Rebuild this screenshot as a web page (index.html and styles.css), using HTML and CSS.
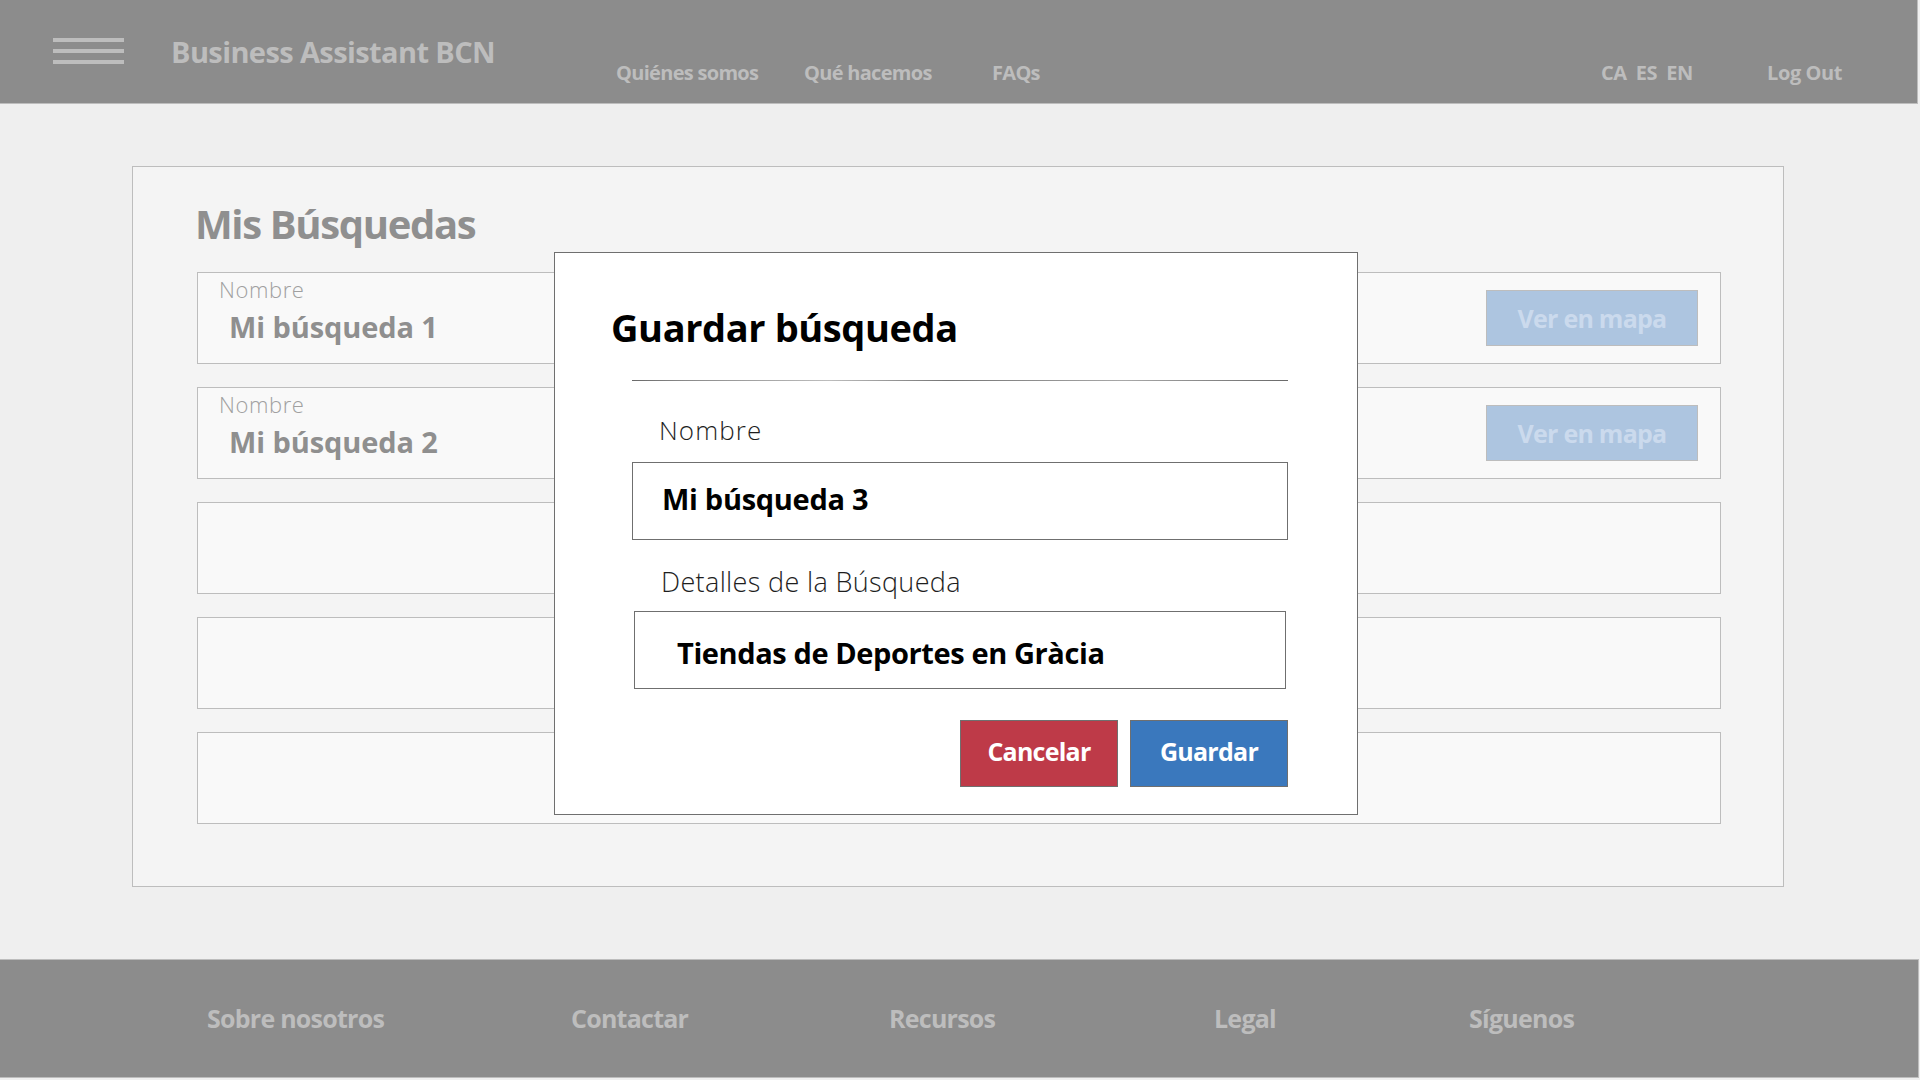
FILE: index.html
```html
<!DOCTYPE html>
<html lang="es">
<head>
<meta charset="utf-8">
<title>Business Assistant BCN - Mis Búsquedas</title>
<link rel="stylesheet" href="styles.css">
</head>
<body>
<div class="page">
  <header class="topbar">
    <div class="burger"><span></span><span></span><span></span></div>
    <div class="brand">Business Assistant BCN</div>
    <nav class="mainnav">
      <a class="navlink">Quiénes somos</a>
      <a class="navlink">Qué hacemos</a>
      <a class="navlink">FAQs</a>
    </nav>
    <div class="langs"><a>CA</a><a>ES</a><a>EN</a></div>
    <a class="logout">Log Out</a>
  </header>

  <main class="main">
    <section class="panel">
      <h1 class="panel-title">Mis Búsquedas</h1>
      <div class="rows">
        <div class="row">
          <div class="row-info">
            <div class="row-label">Nombre</div>
            <div class="row-value">Mi búsqueda 1</div>
          </div>
          <button class="map-btn">Ver en mapa</button>
        </div>
        <div class="row">
          <div class="row-info">
            <div class="row-label">Nombre</div>
            <div class="row-value">Mi búsqueda 2</div>
          </div>
          <button class="map-btn">Ver en mapa</button>
        </div>
        <div class="row"></div>
        <div class="row"></div>
        <div class="row"></div>
      </div>
    </section>
  </main>

  <footer class="footer">
    <a>Sobre nosotros</a>
    <a>Contactar</a>
    <a>Recursos</a>
    <a>Legal</a>
    <a>Síguenos</a>
  </footer>

  <div class="modal">
    <h2 class="modal-title">Guardar búsqueda</h2>
    <div class="modal-body">
      <div class="separator"></div>
      <div class="field-label">Nombre</div>
      <div class="field field-name"><span>Mi búsqueda 3</span></div>
      <div class="field-label field-label-details">Detalles de la Búsqueda</div>
      <div class="field field-details"><span>Tiendas de Deportes en Gràcia</span></div>
      <div class="actions">
        <button class="btn btn-cancel">Cancelar</button>
        <button class="btn btn-save">Guardar</button>
      </div>
    </div>
  </div>
</div>
</body>
</html>
```
FILE: styles.css
```css
* { box-sizing: border-box; }
html, body { margin: 0; padding: 0; }
body {
  background: #efefef;
  font-family: "Open Sans", "Noto Sans", "Liberation Sans", sans-serif;
  width: 1920px;
  height: 1080px;
  overflow: hidden;
}
.page { position: relative; width: 1920px; height: 1080px; }
a { text-decoration: none; color: inherit; }
button { font-family: inherit; cursor: pointer; }

/* Header */
.topbar {
  display: grid;
  grid-template-columns: 119px 444px 985px 166px 1fr;
  align-items: start;
  width: 1918px;
  height: 104px;
  padding-left: 53px;
  background: #8c8c8c;
  border-bottom: 1px solid #bdbdbd;
  border-right: 1px solid #bdbdbd;
  color: #bdbdbd;
  font-weight: 700;
}
.burger { display: flex; flex-direction: column; gap: 7px; width: 71px; margin-top: 38px; }
.burger span { display: block; height: 4px; background: #bdbdbd; }
.brand { font-size: 29px; line-height: 1; margin-top: 37px; margin-left: -1px; white-space: nowrap; letter-spacing: -0.6px; }
.mainnav { display: flex; margin-top: 63px; font-size: 20px; line-height: 1; letter-spacing: -0.7px; }
.navlink { width: 188px; white-space: nowrap; }
.navlink:last-child { width: auto; }
.langs { display: flex; gap: 9px; margin-top: 63px; font-size: 20px; line-height: 1; letter-spacing: -0.4px; }
.logout { margin-top: 63px; font-size: 20px; line-height: 1; letter-spacing: -0.4px; white-space: nowrap; }

/* Main */
.main { padding: 62px 0 72px 132px; }
.panel {
  width: 1652px;
  background: #f4f4f4;
  border: 1px solid #bdbdbd;
  padding: 37px 62px 62px 62px;
}
.panel-title {
  margin: 0 0 28px 0;
  font-size: 40px;
  line-height: 1;
  font-weight: 700;
  color: #8f8f8f;
  letter-spacing: -1.35px;
}
.rows { display: flex; flex-direction: column; gap: 23px; padding-left: 2px; }
.row {
  height: 92px;
  background: #f9f9f9;
  border: 1px solid #bdbdbd;
  display: flex;
  align-items: center;
  justify-content: space-between;
  padding: 0 22px 0 21px;
}
.row-info { align-self: flex-start; padding-top: 5px; }
.row-label { font-size: 22px; line-height: 1; font-weight: 300; color: #a0a0a0; letter-spacing: 0.6px; }
.row-value { margin-top: 12px; padding-left: 10px; font-size: 29px; line-height: 1; font-weight: 700; color: #8f8f8f; letter-spacing: -0.1px; }
.map-btn {
  width: 212px;
  height: 56px;
  background: #adc5e0;
  border: 1px solid #bdbdbd;
  color: #cbdaed;
  font-size: 25px;
  font-weight: 700;
  line-height: 1;
  padding: 0;
  letter-spacing: -0.75px;
}

/* Footer */
.footer {
  display: grid;
  grid-template-columns: 364px 318px 325px 255px 1fr;
  width: 1919px;
  height: 119px;
  padding: 46px 0 0 207px;
  background: #8c8c8c;
  border-top: 1px solid #bdbdbd;
  border-bottom: 1px solid #bdbdbd;
  border-right: 1px solid #bdbdbd;
  color: #bdbdbd;
  font-size: 25px;
  line-height: 1;
  font-weight: 700;
  letter-spacing: -0.75px;
}
.footer a { white-space: nowrap; }

/* Modal */
.modal {
  position: absolute;
  left: 554px;
  top: 252px;
  width: 804px;
  height: 563px;
  background: #ffffff;
  border: 1px solid #6f6f6f;
  padding: 55px 70px 0 56px;
}
.modal-title {
  margin: 0;
  font-size: 38px;
  line-height: 1;
  font-weight: 700;
  color: #000;
  letter-spacing: -0.4px;
}
.modal-body { padding-left: 21px; width: 677px; }
.separator {
  margin-top: 34px;
  height: 1px;
  width: 656px;
  background: linear-gradient(to right, #6a6a6a 0%, #8a8a8a 8%, #bdbdbd 30%, #757575 48%, #a8a8a8 75%, #6a6a6a 100%);
}
.field-label {
  margin-top: 36px;
  padding-left: 27px;
  font-size: 26px;
  line-height: 1;
  font-weight: 300;
  color: #1e1e1e;
  letter-spacing: 1.1px;
}
.field-label-details { margin-top: 28px; padding-left: 29px; font-size: 27px; letter-spacing: 0.35px; }
.field {
  margin-top: 19px;
  height: 78px;
  border: 1px solid #6f6f6f;
  display: flex;
  align-items: center;
  font-size: 29px;
  line-height: 1;
  font-weight: 700;
  color: #000;
  letter-spacing: -0.3px;
}
.field-name { width: 656px; padding: 0 0 6px 29px; }
.field-details { width: 652px; margin-left: 2px; margin-top: 16px; padding: 5px 0 0 42px; letter-spacing: -0.4px; }
.actions { display: flex; justify-content: flex-end; gap: 12px; width: 656px; margin-top: 31px; }
.btn {
  width: 158px;
  height: 67px;
  border: 1px solid #6f6f6f;
  color: #ffffff;
  font-size: 25px;
  font-weight: 700;
  line-height: 1;
  padding: 0 0 4px 0;
  letter-spacing: -0.75px;
}
.btn-cancel { background: #be3a48; }
.btn-save { background: #3a78bd; }
```
